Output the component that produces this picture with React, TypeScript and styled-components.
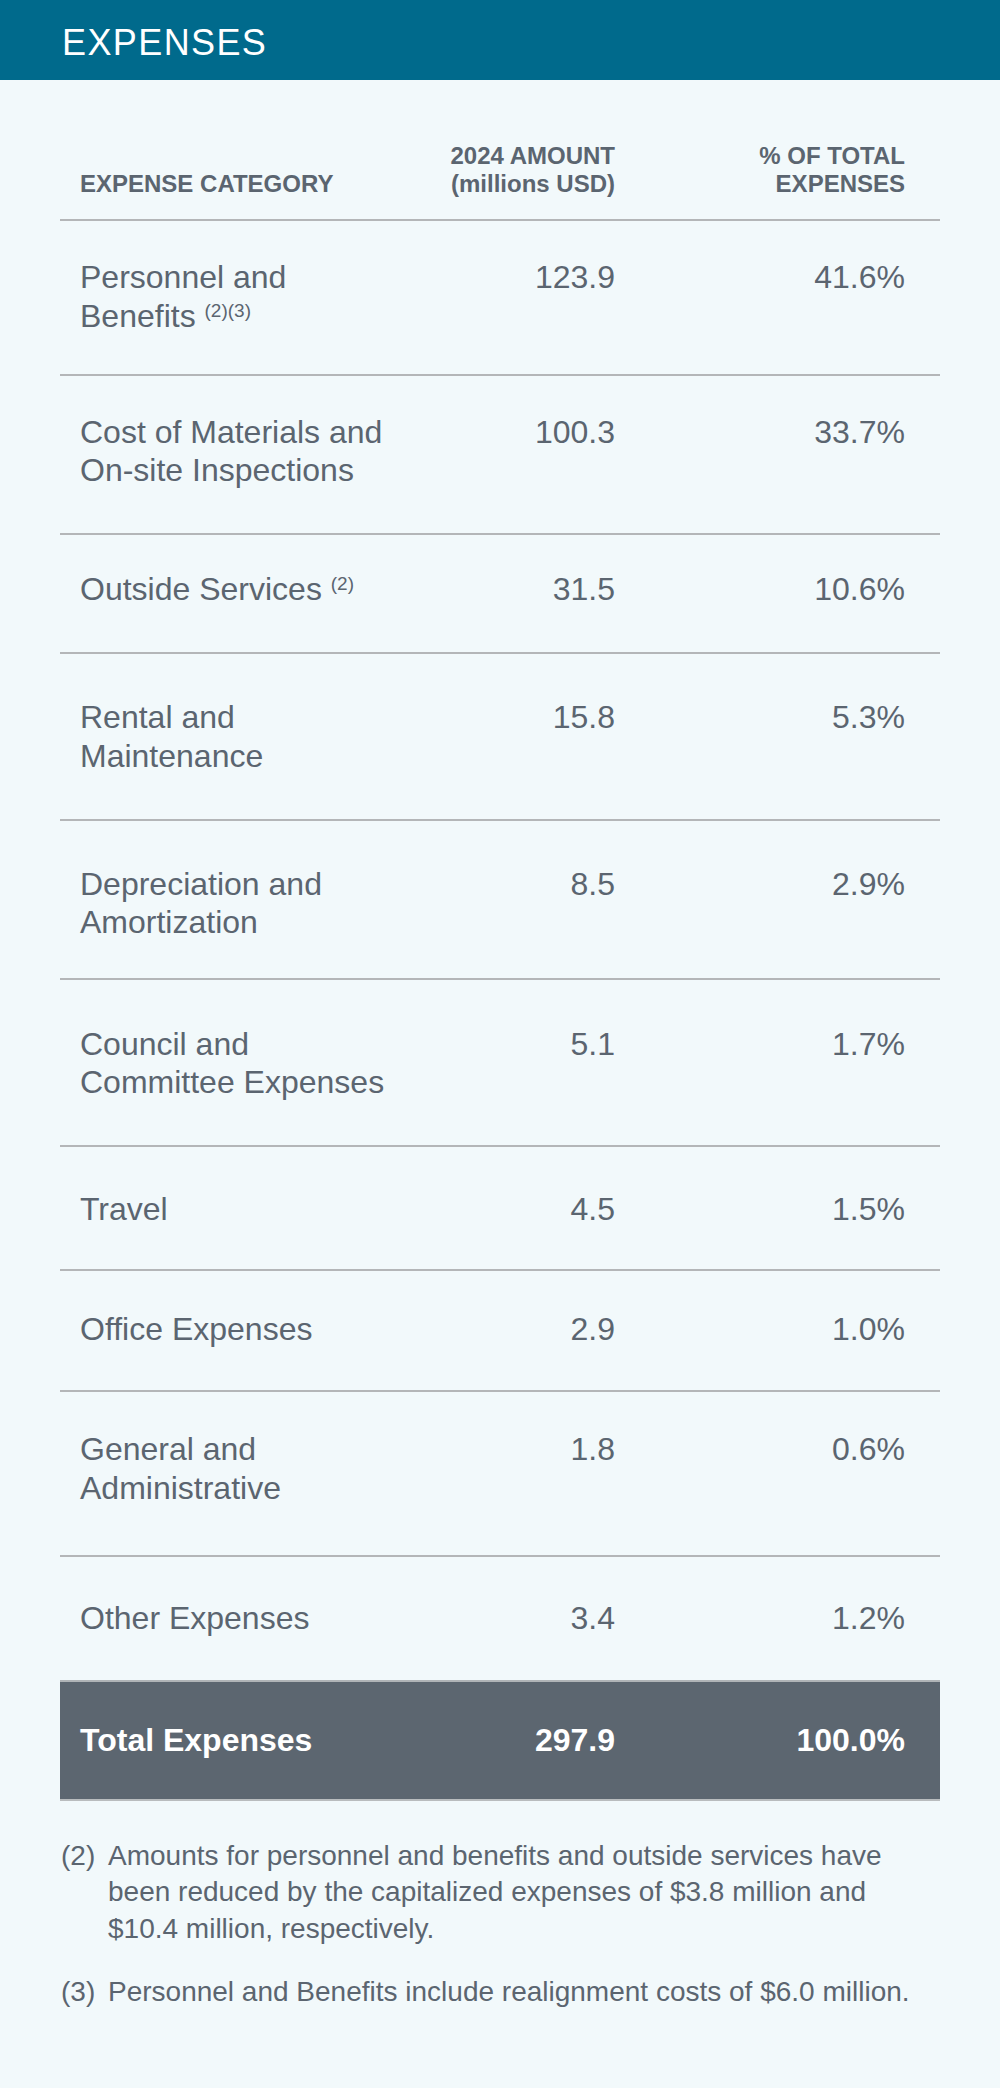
import styled, { createGlobalStyle } from "styled-components";

type Expense = {
  label: string;
  note?: string;
  amount: string;
  share: string;
  space: [number, number];
};

const EXPENSES: Expense[] = [
  { label: "Personnel and Benefits", note: "(2)(3)", amount: "123.9", share: "41.6%", space: [37, 39] },
  { label: "Cost of Materials and On-site Inspections", amount: "100.3", share: "33.7%", space: [37, 43] },
  { label: "Outside Services", note: "(2)", amount: "31.5", share: "10.6%", space: [35, 44] },
  { label: "Rental and Maintenance", amount: "15.8", share: "5.3%", space: [44, 44] },
  { label: "Depreciation and Amortization", amount: "8.5", share: "2.9%", space: [44, 36] },
  { label: "Council and Committee Expenses", amount: "5.1", share: "1.7%", space: [45, 44] },
  { label: "Travel", amount: "4.5", share: "1.5%", space: [43, 40] },
  { label: "Office Expenses", amount: "2.9", share: "1.0%", space: [39, 42] },
  { label: "General and Administrative", amount: "1.8", share: "0.6%", space: [38, 48] },
  { label: "Other Expenses", amount: "3.4", share: "1.2%", space: [42, 43] },
];

const NOTES = [
  {
    mark: "(2)",
    text: "Amounts for personnel and benefits and outside services have been reduced by the capitalized expenses of $3.8 million and $10.4 million, respectively.",
  },
  {
    mark: "(3)",
    text: "Personnel and Benefits include realignment costs of $6.0 million.",
  },
];

const App = () => {
  return (
    <Page>
      <GlobalStyle />
      <TitleBar>
        <Title>EXPENSES</Title>
      </TitleBar>
      <Content>
        <Table>
          <HeadRow>
            <HeadCell>EXPENSE CATEGORY</HeadCell>
            <HeadCell $align="right">
              2024 AMOUNT
              <br />
              (millions USD)
            </HeadCell>
            <HeadCell $align="right" $last>
              % OF TOTAL
              <br />
              EXPENSES
            </HeadCell>
          </HeadRow>
          {EXPENSES.map((item) => (
            <Row key={item.label}>
              <Cell $space={item.space}>
                {item.label}
                {item.note && (
                  <>
                    {" "}
                    <Sup>{item.note}</Sup>
                  </>
                )}
              </Cell>
              <Cell $space={item.space} $align="right">
                {item.amount}
              </Cell>
              <Cell $space={item.space} $align="right" $last>
                {item.share}
              </Cell>
            </Row>
          ))}
          <TotalRow>
            <Cell $strong $space={[39, 39]}>
              Total Expenses
            </Cell>
            <Cell $strong $space={[39, 39]} $align="right">
              297.9
            </Cell>
            <Cell $strong $space={[39, 39]} $align="right" $last>
              100.0%
            </Cell>
          </TotalRow>
        </Table>
        <Notes>
          {NOTES.map((note) => (
            <Note key={note.mark}>
              <NoteMark>{note.mark}</NoteMark>
              <span>{note.text}</span>
            </Note>
          ))}
        </Notes>
      </Content>
    </Page>
  );
};

export default App;

const GlobalStyle = createGlobalStyle`
  html, body {
    margin: 0;
    padding: 0;
    background: #f2f9fb;
  }

  body {
    font-family: "Liberation Sans", Arial, Helvetica, sans-serif;
    -webkit-font-smoothing: antialiased;
  }
`;

const Page = styled.div`
  min-height: 100vh;
  background: #f2f9fb;
  color: #5b6570;
`;

const TitleBar = styled.header`
  height: 80px;
  box-sizing: border-box;
  padding: 6px 62px 0;
  background: #006a8c;
`;

const Title = styled.h1`
  margin: 0;
  font-size: 36px;
  font-weight: 300;
  line-height: 74px;
  letter-spacing: 1.4px;
  color: #ffffff;
`;

const Content = styled.main`
  padding: 62px 60px 40px;
`;

const Table = styled.div`
  display: flex;
  flex-direction: column;
`;

const Row = styled.div`
  display: grid;
  grid-template-columns: 355px 220px 1fr;
  border-bottom: 2px solid #b4b6b8;
`;

const HeadRow = styled(Row)`
  align-items: end;
`;

const TotalRow = styled(Row)`
  background: #5c6670;
  border-top: 2px solid #b0b4b7;
  border-bottom: 2px solid #b9bcbe;
  margin-top: -2px;
`;

const HeadCell = styled.div<{ $align?: "left" | "right"; $last?: boolean }>`
  padding: 0 ${({ $last }) => ($last ? "35px" : "20px")} 22px 20px;
  font-size: 24px;
  font-weight: 700;
  line-height: 1.15;
  text-align: ${({ $align }) => $align ?? "left"};
  color: #5b6570;
`;

const Cell = styled.div<{
  $align?: "left" | "right";
  $last?: boolean;
  $strong?: boolean;
  $space?: [number, number];
}>`
  padding: ${({ $space = [41, 41] }) => `${$space[0]}px`}
    ${({ $last }) => ($last ? "35px" : "20px")}
    ${({ $space = [41, 41] }) => `${$space[1]}px`} 20px;
  font-size: 32px;
  font-weight: ${({ $strong }) => ($strong ? 700 : 400)};
  line-height: 1.2;
  text-align: ${({ $align }) => $align ?? "left"};
  color: ${({ $strong }) => ($strong ? "#ffffff" : "#5b6570")};
`;

const Sup = styled.span`
  font-size: 19px;
  line-height: 0;
  vertical-align: 10px;
`;

const Notes = styled.section`
  margin-top: 37px;
  padding-right: 15px;
  display: flex;
  flex-direction: column;
  gap: 27px;
`;

const Note = styled.p`
  margin: 0;
  display: grid;
  grid-template-columns: 48px 1fr;
  font-size: 28px;
  line-height: 1.3;
  color: #5b6570;
`;

const NoteMark = styled.span`
  padding-left: 1px;
`;
